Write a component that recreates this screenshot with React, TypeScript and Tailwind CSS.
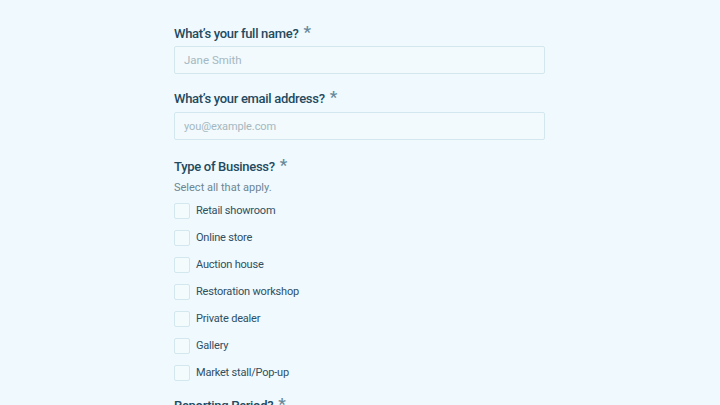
import { useState } from 'react'

const businessTypes = [
  'Retail showroom',
  'Online store',
  'Auction house',
  'Restoration workshop',
  'Private dealer',
  'Gallery',
  'Market stall/Pop-up',
]

function Label({ text }: { text: string }) {
  return (
    <div className="flex items-start h-5 text-[13px] leading-5 font-medium tracking-[-0.3px] text-[#234a60]">
      <span>{text}</span>
      <span className="ml-[5px] text-[17px] leading-4 text-[#67889a]">*</span>
    </div>
  )
}

export default function App() {
  const [checked, setChecked] = useState<string[]>([])

  const toggle = (t: string) =>
    setChecked(prev => (prev.includes(t) ? prev.filter(x => x !== t) : [...prev, t]))

  return (
    <div
      className="min-h-screen h-[405px] overflow-hidden bg-[#f0f9fd]"
      style={{ fontFamily: 'Roboto, "Liberation Sans", sans-serif' }}
    >
      <div className="w-[371px] ml-[174px] pt-[24px] flex flex-col">
        <Label text="What’s your full name?" />
        <input
          type="text"
          placeholder="Jane Smith"
          className="mt-[2px] h-[28px] w-full rounded-[2px] border border-[#d3e8ee] bg-[#f2fafd] px-[9px] text-[11.5px] text-[#284a5e] placeholder:text-[#a5b8c1] outline-none"
        />

        <div className="mt-[15px]">
          <Label text="What’s your email address?" />
        </div>
        <input
          type="email"
          placeholder="you@example.com"
          className="mt-[3px] h-[28px] w-full rounded-[2px] border border-[#d3e8ee] bg-[#f2fafd] px-[9px] text-[11px] tracking-[-0.1px] text-[#284a5e] placeholder:text-[#a5b8c1] outline-none"
        />

        <div className="mt-[17px]">
          <Label text="Type of Business?" />
        </div>
        <p className="mt-[2px] text-[11px] leading-[18px] text-[#6c8694]">Select all that apply.</p>

        <div className="mt-[5px] flex flex-col gap-[9px]">
          {businessTypes.map(t => (
            <label key={t} className="flex items-center h-[18px] gap-[6px] cursor-pointer">
              <span
                onClick={() => toggle(t)}
                className={`w-4 h-4 rounded-[2px] border border-[#d3e8ee] ${
                  checked.includes(t) ? 'bg-[#284a5e]' : 'bg-[#f4fbfd]'
                }`}
              />
              <span className="text-[11px] leading-[18px] tracking-[-0.2px] text-[#2f4f62]">{t}</span>
            </label>
          ))}
        </div>

        <div className="mt-[14px]">
          <Label text="Reporting Period?" />
        </div>
      </div>
    </div>
  )
}
